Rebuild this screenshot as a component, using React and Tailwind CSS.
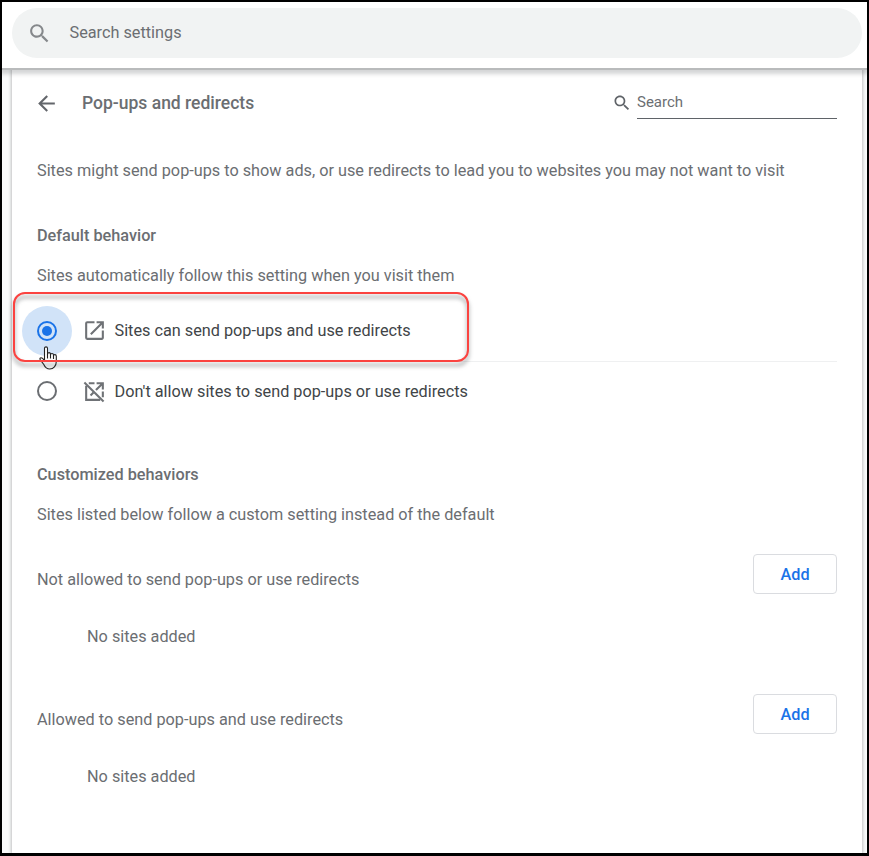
const SearchIcon = ({ className }) => (
  <svg className={className} viewBox="0 0 24 24" fill="currentColor">
    <path d="M15.5 14h-.79l-.28-.27C15.41 12.59 16 11.11 16 9.5 16 5.91 13.09 3 9.5 3S3 5.91 3 9.5 5.91 16 9.5 16c1.61 0 3.09-.59 4.23-1.57l.27.28v.79l5 4.99L20.49 19l-4.99-5zm-6 0C7.01 14 5 11.99 5 9.5S7.01 5 9.5 5 14 7.01 14 9.5 11.99 14 9.5 14z" />
  </svg>
);

const BackIcon = () => (
  <svg className="h-[25px] w-[25px] text-[#63666b]" viewBox="0 0 24 24" fill="currentColor">
    <path d="M20 11H7.83l5.59-5.59L12 4l-8 8 8 8 1.41-1.41L7.83 13H20v-2z" />
  </svg>
);

const OpenIcon = () => (
  <svg className="h-[25px] w-[25px] text-[#6f7276]" viewBox="0 0 24 24" fill="currentColor">
    <path d="M19 19H5V5h7V3H5a2 2 0 0 0-2 2v14a2 2 0 0 0 2 2h14c1.1 0 2-.9 2-2v-7h-2v7zM14 3v2h3.59l-9.83 9.83 1.41 1.41L19 6.41V10h2V3h-7z" />
  </svg>
);

const BlockedIcon = () => (
  <svg className="h-[25px] w-[25px] text-[#6f7276]" viewBox="0 0 24 24" fill="none" stroke="currentColor" strokeWidth="2">
    <path d="M4 6.5V20h13.5M6.5 4H12M20 12v5.5M14 4h6v6M19.5 4.5l-6.1 6.1M11 13l-2.8 2.8" />
    <path d="M2.3 3.3l18.4 18.4" />
  </svg>
);

const HandCursor = () => (
  <svg className="absolute left-[37px] top-[344px] h-6 w-[19px]" viewBox="0 0 19 24">
    <path
      d="M5.5 14V2.2C5.5.4 8.5.4 8.5 2.2V8.5C8.5 6 11.5 6 11.5 8.3V9C11.5 6.9 14.5 7 14.5 9V10C14.5 8 17.3 8.2 17.3 10.2V15.5C17.3 20 14.5 23 10.8 23C7.5 23 6 21.3 4.8 18.5L1.3 13.8C.2 12.1 2 11.2 3.3 12.2L5.5 14.3"
      fill="#fff"
      stroke="#222"
      strokeWidth="1.1"
      strokeLinejoin="round"
    />
    <path d="M8.5 8v4.5M11.5 8.5v4M14.5 9.5v3.5" fill="none" stroke="#222" strokeWidth="1.1" />
  </svg>
);

const Radio = ({ checked }) => (
  <span
    className={
      checked
        ? 'flex h-[50px] w-[50px] shrink-0 items-center justify-center rounded-full bg-[#d1e3f8]'
        : 'flex h-[50px] w-[50px] shrink-0 items-center justify-center'
    }
  >
    <span
      className={
        checked
          ? 'flex h-5 w-5 items-center justify-center rounded-full border-2 border-[#1a73e8]'
          : 'h-5 w-5 rounded-full border-2 border-[#6b6e72]'
      }
    >
      {checked && <span className="h-2.5 w-2.5 rounded-full bg-[#1a73e8]" />}
    </span>
  </span>
);

const SiteList = ({ title }) => (
  <section className="h-[140px]">
    <div className="flex h-[60px] items-center justify-between">
      <p className="pt-[11px]">{title}</p>
      <button className="h-10 w-[84px] rounded border border-[#dadce0] pt-[2px] font-medium text-[#1a73e8]">
        Add
      </button>
    </div>
    <p className="mt-[21px] pl-[50px]">No sites added</p>
  </section>
);

const App = () => {
  return (
    <div className="relative flex h-[856px] w-[869px] flex-col overflow-hidden border-2 border-b-[3px] border-black bg-[#fafbfb] font-['Roboto',sans-serif] text-[16.25px] leading-6 text-[#6b6e72]">
      {/* Toolbar */}
      <header className="z-10 h-[66px] shrink-0 bg-white pl-[10px] pr-[5px] pt-1.5 shadow-[0_2px_0_#b9bbbc,0_4px_4px_2px_rgba(60,64,67,0.22)]">
        <div className="flex h-[50px] items-center rounded-full bg-[#f1f3f3]">
          <SearchIcon className="ml-[15px] h-[25px] w-[25px] text-[#85888b]" />
          <span className="ml-[17.5px]">Search settings</span>
        </div>
      </header>

      <main className="ml-[10px] mr-[5px] flex-1 bg-white px-[25px] pt-0.5 shadow-[0_0_3px_1px_rgba(60,64,67,0.3)]">
        <div className="flex h-[67px] items-center">
          <span className="-ml-[3px] -mt-px">
            <BackIcon />
          </span>
          <h1 className="-mt-px ml-[23px] text-[17.5px] font-medium">Pop-ups and redirects</h1>
          <div className="-mt-px ml-auto flex items-center">
            <SearchIcon className="mr-[5px] h-5 w-5 text-[#5f6368]" />
            <div className="mb-px h-8 w-[200px] border-b border-[#5f6368] pt-[3px] text-[15px]">
              Search
            </div>
          </div>
        </div>

        <p className="mt-[22px]">
          Sites might send pop-ups to show ads, or use redirects to lead you to websites you may not want to visit
        </p>

        <h2 className="mt-[41px] font-medium">Default behavior</h2>
        <p className="mt-4">Sites automatically follow this setting when you visit them</p>

        <div className="-ml-[15px] mt-[13px] text-[#414548]">
          <label className="flex h-[60px] items-center">
            <Radio checked />
            <span className="-mt-px ml-2.5 mr-[7.5px]">
              <OpenIcon />
            </span>
            Sites can send pop-ups and use redirects
          </label>
          <div className="ml-[15px] h-px bg-[#eff0f1]" />
          <label className="flex h-[58px] items-center">
            <Radio />
            <span className="ml-2.5 mr-[7.5px]">
              <BlockedIcon />
            </span>
            <span className="pt-[2px]">Don't allow sites to send pop-ups or use redirects</span>
          </label>
        </div>

        <h2 className="mt-[43px] font-medium">Customized behaviors</h2>
        <p className="mb-[17px] mt-4">Sites listed below follow a custom setting instead of the default</p>

        <SiteList title="Not allowed to send pop-ups or use redirects" />
        <SiteList title="Allowed to send pop-ups and use redirects" />
      </main>

      {/* Pointer sits under the callout outline */}
      <HandCursor />
      <div className="pointer-events-none absolute left-[11px] top-[290px] h-[70px] w-[456px] rounded-xl border-2 border-[#fb4340] drop-shadow-[0_4px_2px_rgba(60,64,67,0.55)]" />
    </div>
  );
};

export default App;
